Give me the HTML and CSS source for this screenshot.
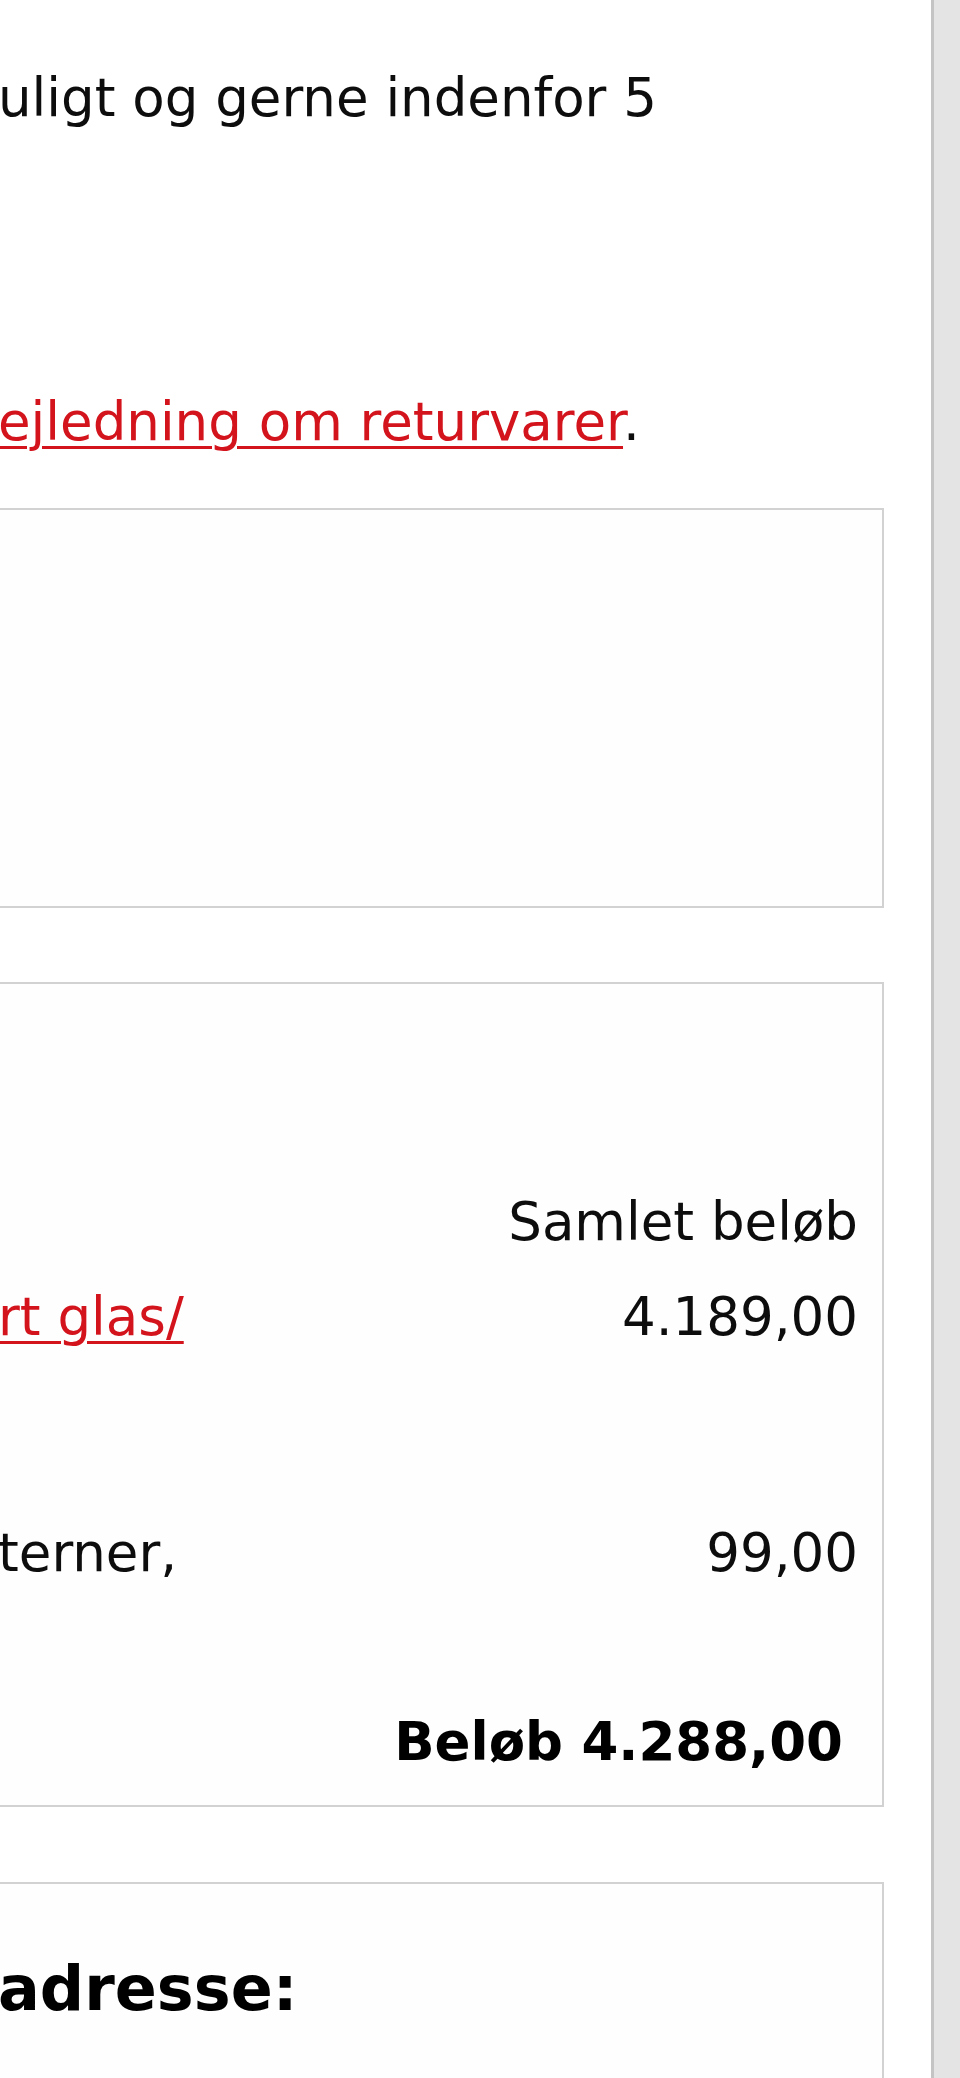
FILE: index.html
```html
<!DOCTYPE html>
<html lang="da">
<head>
<meta charset="utf-8">
<title>Ordrebekræftelse</title>
<link rel="stylesheet" href="styles.css">
</head>
<body>
<div class="viewport">
  <main class="page">
    <div class="sheet">
      <p class="note">uligt og gerne indenfor 5</p>
      <p class="note note-return"><a class="link" href="#">ejledning om returvarer</a>.</p>

      <section class="panel panel-empty"></section>

      <section class="panel order">
        <div class="order-head">Samlet beløb</div>
        <div class="order-line order-line-first">
          <a class="link" href="#">rt glas/</a>
          <span class="amount">4.189,00</span>
        </div>
        <div class="order-line">
          <span>terner,</span>
          <span class="amount">99,00</span>
        </div>
        <div class="order-total">Beløb 4.288,00</div>
      </section>

      <section class="panel address">
        <h2 class="panel-title">adresse:</h2>
      </section>
    </div>
  </main>
  <div class="scrollbar"></div>
</div>
</body>
</html>
```

FILE: styles.css
```css
html, body {
  margin: 0;
  padding: 0;
  background: #ffffff;
}

body {
  font-family: "DejaVu Sans", Verdana, sans-serif;
  font-size: 53px;
  line-height: 95px;
  color: #0d0d0d;
}

.viewport {
  display: flex;
  height: 2078px;
  overflow: hidden;
}

/* the document is scrolled sideways, so its left part is out of view */
.page {
  flex: 1;
  overflow: hidden;
}

.sheet {
  margin-left: -40px;
  margin-right: 47px;
}

.note {
  margin: 0;
  padding-left: 38px;
  white-space: nowrap;
}

.note:first-child {
  padding-top: 50px;
}

.note-return {
  margin-top: 229px;
}

.link {
  color: #d3141c;
  text-decoration: underline;
  text-underline-offset: 6px;
  text-decoration-thickness: 3px;
}

.panel {
  border: 2px solid #d2d2d2;
  background: #fefefe;
  padding: 0 24px 0 36px;
}

.panel-empty {
  margin-top: 39px;
  height: 396px;
}

.order {
  margin-top: 74px;
  padding-top: 190px;
  padding-bottom: 16px;
}

.order-head {
  text-align: right;
}

.order-line {
  display: flex;
  justify-content: space-between;
  white-space: nowrap;
}

.order-line-first {
  min-height: 236px;
}

.amount {
  text-align: right;
}

.order-total {
  margin-top: 94px;
  padding-right: 15px;
  text-align: right;
  font-weight: bold;
  color: #000000;
}

.address {
  margin-top: 75px;
  padding-top: 57px;
  height: 400px;
}

.panel-title {
  margin: 0;
  font-size: 62px;
  line-height: 95px;
  font-weight: bold;
  color: #000000;
}

.scrollbar {
  flex: 0 0 26px;
  border-left: 3px solid #c4c4c4;
  background: #e4e4e4;
}
```
